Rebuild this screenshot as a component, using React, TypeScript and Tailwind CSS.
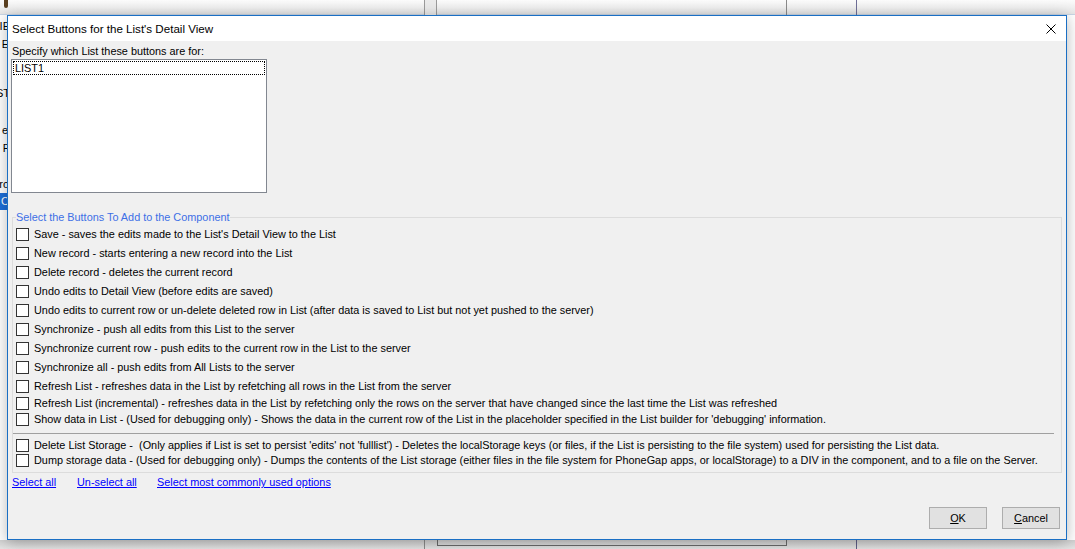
import React from "react";

const rows: { text: string; cls: string }[] = [
  { text: "Save - saves the edits made to the List's Detail View to the List", cls: "mt-0" },
  { text: "New record - starts entering a new record into the List", cls: "mt-[6px]" },
  { text: "Delete record - deletes the current record", cls: "mt-[6px]" },
  { text: "Undo edits to Detail View (before edits are saved)", cls: "mt-[6px]" },
  {
    text: "Undo edits to current row or un-delete deleted row in List (after data is saved to List but not yet pushed to the server)",
    cls: "mt-[6px]",
  },
  { text: "Synchronize - push all edits from this List to the server", cls: "mt-[6px]" },
  { text: "Synchronize current row - push edits to the current row in the List to the server", cls: "mt-[6px]" },
  { text: "Synchronize all - push edits from All Lists to the server", cls: "mt-[6px]" },
  { text: "Refresh List - refreshes data in the List by refetching all rows in the List from the server", cls: "mt-[6px]" },
  {
    text: "Refresh List (incremental) - refreshes data in the List by refetching only the rows on the server that have changed since the last time the List was refreshed",
    cls: "mt-[4px]",
  },
  {
    text: "Show data in List - (Used for debugging only) - Shows the data in the current row of the List in the placeholder specified in the List builder for 'debugging' information.",
    cls: "mt-[3px]",
  },
];

const storageRows: { text: string; cls: string }[] = [
  {
    text: "Delete List Storage -  (Only applies if List is set to persist 'edits' not 'fulllist') - Deletes the localStorage keys (or files, if the List is persisting to the file system) used for persisting the List data.",
    cls: "mt-[5px]",
  },
  {
    text: "Dump storage data - (Used for debugging only) - Dumps the contents of the List storage (either files in the file system for PhoneGap apps, or localStorage) to a DIV in the component, and to a file on the Server.",
    cls: "mt-[2px]",
  },
];

const CheckRow = ({ text, cls }: { text: string; cls: string }) => (
  <div className={`flex items-center h-[13px] ${cls}`}>
    <span className="w-[13px] h-[13px] border border-[#333333] bg-white shrink-0" />
    <span className="ml-[5px] leading-[13px] whitespace-pre text-black">{text}</span>
  </div>
);

// bits of the window behind the dialog
const Behind = () => (
  <>
    <div className="absolute left-0 top-0 w-full h-[15px] bg-gradient-to-b from-[#fbfbfb] to-[#e6e6e6] border-b border-[#c9d6e6]" />
    <div className="absolute left-[424px] top-0 w-[13px] h-[15px] border-l border-r border-[#9a9a9a] bg-[#eaeaea]" />
    <div className="absolute left-[786px] top-0 w-[71px] h-[15px] border-l border-r border-l-[#8a8a8a] border-r-[#6e6e96]" />
    <div className="absolute left-0 top-[540px] w-full h-[9px] bg-gradient-to-b from-[#d0d0d0] to-[#e4e4e4]" />
    <div className="absolute left-[424px] top-[538px] w-px h-[11px] bg-[#8a8a8a]" />
    <div className="absolute left-[437px] top-[538px] w-[350px] h-[8px] border-l border-r border-b border-[#6a6a6a]" />
    <div className="absolute left-[856px] top-[538px] w-px h-[11px] bg-[#5e5e86]" />
    <div className="absolute left-[4px] top-0 w-[4px] h-[8px] bg-[#5a4020] rounded-b-sm" />
    <div className="absolute left-0 top-[15px] w-[10px] h-[210px] overflow-hidden text-[11px] text-black leading-[14px]">
      <div className="absolute right-0 top-[4px] whitespace-pre">IE</div>
      <div className="absolute right-[1px] top-[22px] whitespace-pre">E</div>
      <div className="absolute right-0 top-[71px] whitespace-pre">ST</div>
      <div className="absolute right-[2px] top-[108px] whitespace-pre">e</div>
      <div className="absolute right-0 top-[126px] whitespace-pre">: P</div>
      <div className="absolute right-[1px] top-[162px] whitespace-pre">ro</div>
      <div className="absolute left-0 top-[178px] w-[10px] h-[17px] bg-[#1e6fd9] text-white pl-[1px] leading-[17px]">C</div>
    </div>
  </>
);

export default function App() {
  return (
    <div className="relative w-[1075px] h-[549px] overflow-hidden bg-white font-['Liberation_Sans',Arial,sans-serif] text-[10.87px]">
      <Behind />
      <div className="absolute left-[7px] top-[15px] w-[1060px] h-[525px] border border-[#1a6fc4] bg-[#f0f0f0] flex flex-col shadow-[0_2px_14px_rgba(0,0,0,0.28)]">
        <div className="h-[25px] bg-white flex items-center justify-between pl-[4px] pr-[10px] shrink-0">
          <span className="text-[11.6px] text-black">Select Buttons for the List's Detail View</span>
          <svg width="10" height="10" viewBox="0 0 10 10" className="shrink-0">
            <path d="M0.5 0.5 L9.5 9.5 M9.5 0.5 L0.5 9.5" stroke="#000" strokeWidth="1" />
          </svg>
        </div>

        <div className="flex flex-col flex-1">
          <div className="mt-[3px] ml-[4px] leading-[14px] text-black">Specify which List these buttons are for:</div>
          <div className="mt-[1px] ml-[3px] w-[256px] h-[134px] border border-[#828790] bg-white p-px">
            <div className="h-[14px] border border-dotted border-black pl-px leading-[12px] text-black">LIST1</div>
          </div>

          <fieldset className="mt-[17px] mx-[4px] border border-[#dcdcdc] px-[3px] pt-[4px] pb-[5px]">
            <legend className="leading-[14px] text-[#3d6fe6]">Select the Buttons To Add to the Component</legend>
            {rows.map((r) => (
              <CheckRow key={r.text} text={r.text} cls={r.cls} />
            ))}
            <div className="mt-[7px] -ml-[3px] w-[1041px] border-t border-[#a0a0a0]" />
            {storageRows.map((r) => (
              <CheckRow key={r.text} text={r.text} cls={r.cls} />
            ))}
          </fieldset>

          <div className="mt-[2px] ml-[4px] flex leading-[14px] text-[#0000ff] underline">
            <span className="w-[65px]">Select all</span>
            <span className="w-[80px]">Un-select all</span>
            <span>Select most commonly used options</span>
          </div>

          <div className="mt-auto flex justify-end gap-[15px] pr-[6px] pb-[10px]">
            <button className="w-[58px] h-[22px] border border-[#adadad] bg-[#e1e1e1] text-black">
              <span className="underline">O</span>K
            </button>
            <button className="w-[58px] h-[22px] border border-[#adadad] bg-[#e1e1e1] text-black">
              <span className="underline">C</span>ancel
            </button>
          </div>
        </div>
      </div>
    </div>
  );
}
